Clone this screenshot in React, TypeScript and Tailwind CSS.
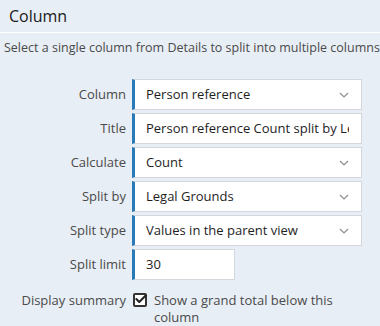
import { Check } from 'lucide-react';

const font = { fontFamily: '"Open Sans", "Liberation Sans", sans-serif' };

function Chevron() {
  return (
    <svg width="10" height="6" viewBox="0 0 10 6" className="shrink-0">
      <path d="M1 1l4 4 4-4" fill="none" stroke="#8a8f96" strokeWidth="1.2" />
    </svg>
  );
}

function Field({ label, value, select, narrow }: { label: string; value: string; select?: boolean; narrow?: boolean }) {
  return (
    <div className="flex items-center h-[31px]">
      <div className="w-[132px] shrink-0 pr-[6px] text-right text-[13px] text-[#4a4a4a]">{label}</div>
      <div
        className={`h-full flex items-center bg-white border-l-[3px] border-l-[#2a7ab8] border-r border-b border-t border-[#d4d8dd] pl-[11px] pr-[12px] ${narrow ? 'w-[103px]' : 'w-[230px]'}`}
      >
        <span className="flex-1 text-[13px] text-[#1e1e1e] whitespace-nowrap overflow-hidden">{value}</span>
        {select && <Chevron />}
      </div>
    </div>
  );
}

export default function App() {
  return (
    <div className="w-[380px] h-[326px] bg-[#e8eef6] overflow-hidden" style={font}>
      <div className="h-[33px] flex items-center pl-[9px] text-[16px] text-[#1a1a1a] border-b border-white">Column</div>
      <div className="pl-[4px] pt-[6px] text-[12.5px] leading-[17px] text-[#4a4a4a] whitespace-nowrap">
        Select a single column from Details to split into multiple columns
      </div>
      <div className="mt-[23px] flex flex-col gap-[3px]">
        <Field label="Column" value="Person reference" select />
        <Field label="Title" value="Person reference Count split by Legal Grounds" />
        <Field label="Calculate" value="Count" select />
        <Field label="Split by" value="Legal Grounds" select />
        <Field label="Split type" value="Values in the parent view" select />
        <Field label="Split limit" value="30" narrow />
      </div>
      <div className="flex items-start mt-[12px]">
        <div className="w-[132px] shrink-0 pr-[6px] text-right text-[13px] text-[#4a4a4a] leading-[17px]">Display summary</div>
        <div className="w-[14px] h-[14px] mt-[1px] ml-[1px] border-2 border-[#333] rounded-[2px] bg-white flex items-center justify-center shrink-0">
          <Check size={14} strokeWidth={3.5} color="#222" className="-mt-[2px] ml-[2px] shrink-0" />
        </div>
        <div className="ml-[7px] w-[190px] text-[13px] text-[#4a4a4a] leading-[17px]">Show a grand total below this column</div>
      </div>
    </div>
  );
}
